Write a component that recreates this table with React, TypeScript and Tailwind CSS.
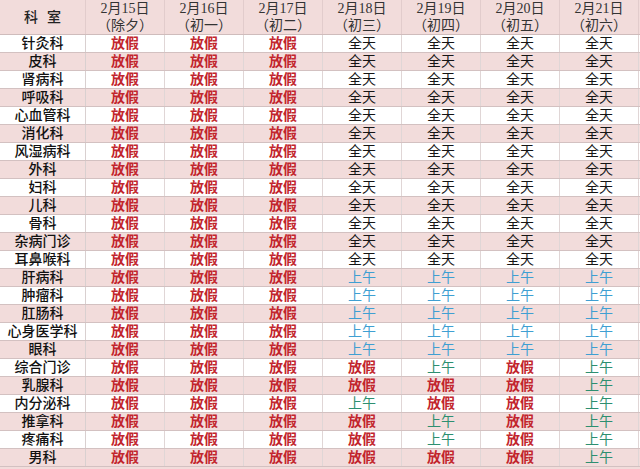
import React from "react";

type Cell = "F" | "Q" | "B" | "G";

const dates = [
  ["2月15日", "（除夕）"],
  ["2月16日", "（初一）"],
  ["2月17日", "（初二）"],
  ["2月18日", "（初三）"],
  ["2月19日", "（初四）"],
  ["2月20日", "（初五）"],
  ["2月21日", "（初六）"],
];

const allDay: Cell[] = ["F", "F", "F", "Q", "Q", "Q", "Q"];
const morning: Cell[] = ["F", "F", "F", "B", "B", "B", "B"];

const rows: [string, Cell[]][] = [
  ["针灸科", allDay],
  ["皮科", allDay],
  ["肾病科", allDay],
  ["呼吸科", allDay],
  ["心血管科", allDay],
  ["消化科", allDay],
  ["风湿病科", allDay],
  ["外科", allDay],
  ["妇科", allDay],
  ["儿科", allDay],
  ["骨科", allDay],
  ["杂病门诊", allDay],
  ["耳鼻喉科", allDay],
  ["肝病科", morning],
  ["肿瘤科", morning],
  ["肛肠科", morning],
  ["心身医学科", morning],
  ["眼科", morning],
  ["综合门诊", ["F", "F", "F", "F", "G", "F", "G"]],
  ["乳腺科", ["F", "F", "F", "F", "F", "F", "G"]],
  ["内分泌科", ["F", "F", "F", "G", "F", "F", "G"]],
  ["推拿科", ["F", "F", "F", "F", "G", "F", "G"]],
  ["疼痛科", ["F", "F", "F", "F", "G", "F", "G"]],
  ["男科", ["F", "F", "F", "F", "F", "F", "G"]],
];

const cellText: Record<Cell, string> = { F: "放假", Q: "全天", B: "上午", G: "上午" };
const cellClass: Record<Cell, string> = {
  F: "text-[#c2252d] font-bold",
  Q: "text-[#151515]",
  B: "text-[#3f9fd2]",
  G: "text-[#2d8f70]",
};

const font = { fontFamily: '"Liberation Serif", "Noto Sans CJK SC", serif' };

export default function App() {
  return (
    <div className="w-[640px] h-[469px] overflow-hidden bg-[#f2dcdb] text-[14px]" style={font}>
      {/* header */}
      <div className="grid grid-cols-[86px_repeat(7,79px)] h-[35px] bg-[#f2dcdb] border-b border-[#cfbcbc]">
        <div className="flex items-center justify-center gap-[9px] font-medium text-[#222] border-r border-[#e2cccc]">
          <span>科</span>
          <span>室</span>
        </div>
        {dates.map(([d, l]) => (
          <div key={d} className="flex flex-col items-center justify-center leading-[17px] text-[#333] border-r border-[#e2cccc]">
            <span>{d}</span>
            <span>{l}</span>
          </div>
        ))}
      </div>

      {/* rows */}
      {rows.map(([name, cells], i) => (
        <div
          key={name}
          className={`grid grid-cols-[86px_repeat(7,79px)] h-[18px] border-b border-[#d3c1c1] ${
            i % 2 === 0 ? "bg-white" : "bg-[#f2dcdb]"
          }`}
        >
          <div className="flex items-center justify-center font-medium text-[#111] border-r border-[#d9d0d0] leading-none">
            {name}
          </div>
          {cells.map((c, j) => (
            <div
              key={j}
              className={`flex items-center justify-center leading-none border-r border-[#e0d6d6] ${cellClass[c]}`}
            >
              {cellText[c]}
            </div>
          ))}
        </div>
      ))}
    </div>
  );
}
